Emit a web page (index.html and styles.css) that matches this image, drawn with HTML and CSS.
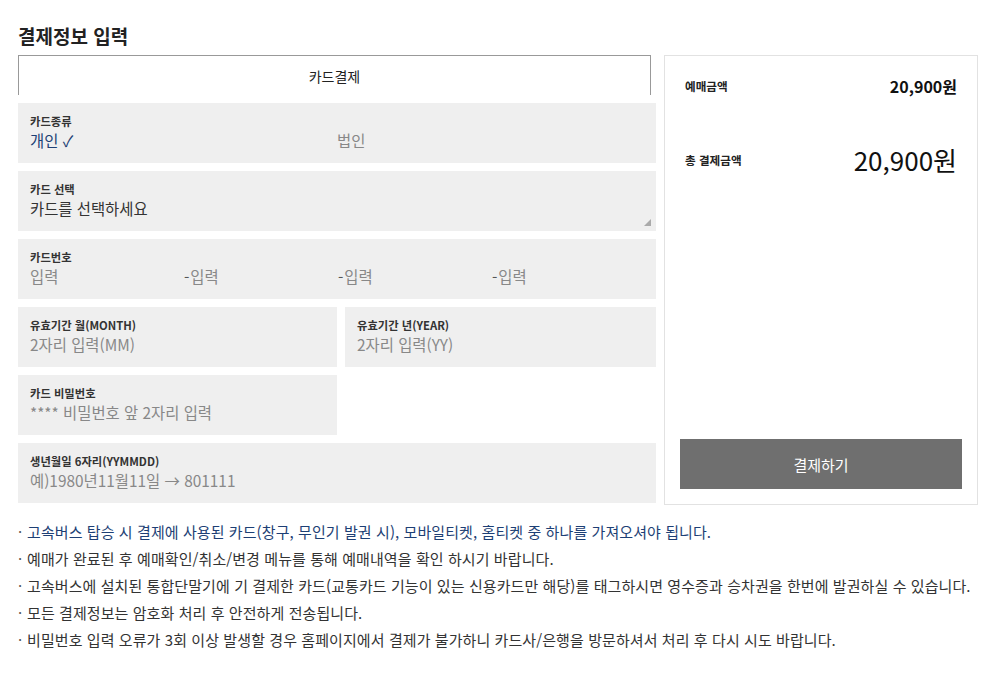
FILE: index.html
```html
<!DOCTYPE html>
<html lang="ko">
<head>
<meta charset="utf-8">
<title>결제정보 입력</title>
<link rel="stylesheet" href="styles.css">
</head>
<body>
<div class="page">
  <h2 class="title">결제정보 입력</h2>
  <div class="main">
    <div class="form-col">
      <div class="tab">카드결제</div>
      <div class="panel">
        <div class="label">카드종류</div>
        <div class="kind-row">
          <span class="kind selected">개인 <span class="check">✓</span></span>
          <span class="kind">법인</span>
        </div>
      </div>
      <div class="panel select-panel">
        <div class="label">카드 선택</div>
        <div class="value dark">카드를 선택하세요</div>
        <span class="resize"></span>
      </div>
      <div class="panel">
        <div class="label">카드번호</div>
        <div class="num-row">
          <span class="value">입력</span>
          <span class="value"><span class="dash">-</span>입력</span>
          <span class="value"><span class="dash">-</span>입력</span>
          <span class="value"><span class="dash">-</span>입력</span>
        </div>
      </div>
      <div class="half-row">
        <div class="panel">
          <div class="label">유효기간 월(MONTH)</div>
          <div class="value">2자리 입력(MM)</div>
        </div>
        <div class="panel">
          <div class="label">유효기간 년(YEAR)</div>
          <div class="value">2자리 입력(YY)</div>
        </div>
      </div>
      <div class="half-row">
        <div class="panel">
          <div class="label">카드 비밀번호</div>
          <div class="value">**** 비밀번호 앞 2자리 입력</div>
        </div>
      </div>
      <div class="panel">
        <div class="label">생년월일 6자리(YYMMDD)</div>
        <div class="value">예)1980년11월11일 → 801111</div>
      </div>
    </div>
    <div class="summary">
      <div class="sum-row">
        <span class="sum-label">예매금액</span>
        <span class="sum-amount">20,900원</span>
      </div>
      <div class="sum-row total">
        <span class="sum-label">총 결제금액</span>
        <span class="total-amount">20,900원</span>
      </div>
      <button class="pay-btn" type="button">결제하기</button>
    </div>
  </div>
  <ul class="notes">
    <li class="highlight">고속버스 탑승 시 결제에 사용된 카드(창구, 무인기 발권 시), 모바일티켓, 홈티켓 중 하나를 가져오셔야 됩니다.</li>
    <li>예매가 완료된 후 예매확인/취소/변경 메뉴를 통해 예매내역을 확인 하시기 바랍니다.</li>
    <li>고속버스에 설치된 통합단말기에 기 결제한 카드(교통카드 기능이 있는 신용카드만 해당)를 태그하시면 영수증과 승차권을 한번에 발권하실 수 있습니다.</li>
    <li>모든 결제정보는 암호화 처리 후 안전하게 전송됩니다.</li>
    <li>비밀번호 입력 오류가 3회 이상 발생할 경우 홈페이지에서 결제가 불가하니 카드사/은행을 방문하셔서 처리 후 다시 시도 바랍니다.</li>
  </ul>
</div>
</body>
</html>
```

FILE: styles.css
```css
* { box-sizing: border-box; }
html, body { margin: 0; padding: 0; background: #fff; }
body {
  font-family: "Noto Sans CJK KR", "Noto Sans", sans-serif;
  color: #333;
}
.page { padding: 23px 21px 0 18px; }
.title {
  margin: 0 0 6px;
  font-size: 19px;
  line-height: 26px;
  font-weight: 700;
  color: #222;
}
.main { display: flex; gap: 8px; align-items: stretch; }
.form-col { width: 638px; display: flex; flex-direction: column; gap: 8px; }
.tab {
  width: 633px;
  height: 40px;
  border: 1px solid #999;
  border-bottom: none;
  text-align: center;
  font-size: 14px;
  line-height: 40px;
  color: #222;
}
.panel {
  position: relative;
  background: #efefef;
  height: 60px;
  padding: 10px 12px 0;
}
.label {
  font-size: 11.3px;
  font-weight: 700;
  line-height: 16px;
  color: #333;
}
.value {
  font-size: 15.4px;
  line-height: 22px;
  color: #888;
}
.value.dark { color: #333; }
.kind-row { display: grid; grid-template-columns: 307px 1fr; font-size: 15.4px; line-height: 22px; }
.kind { color: #888; }
.kind.selected { color: #1d3f75; }
.resize {
  position: absolute;
  right: 5px;
  bottom: 5px;
  width: 0;
  height: 0;
  border-left: 7px solid transparent;
  border-bottom: 7px solid #aaa;
}
.num-row { display: grid; grid-template-columns: repeat(4, 154px); }
.dash { color: #555; margin-right: 1px; }
.half-row { display: grid; grid-template-columns: 319px 311px; gap: 8px; }
.summary {
  width: 314px;
  min-height: 450px;
  border: 1px solid #e2e2e2;
  padding: 20px 15px 15px;
  display: flex;
  flex-direction: column;
}
.sum-row {
  display: flex;
  justify-content: space-between;
  align-items: center;
  padding: 0 5px;
  height: 20px;
}
.sum-label { font-size: 11.6px; font-weight: 700; color: #222; }
.sum-amount { font-size: 16px; font-weight: 700; color: #111; }
.sum-row.total { margin-top: 47px; height: 34px; }
.total-amount { font-size: 26px; font-weight: 400; color: #111; line-height: 34px; }
.pay-btn {
  margin-top: auto;
  height: 50px;
  width: 100%;
  border: none;
  background: #6f6f6f;
  color: #fff;
  font-family: inherit;
  font-size: 15px;
  cursor: pointer;
}
.notes {
  list-style: none;
  margin: 13px 0 0;
  padding: 0;
}
.notes li {
  font-size: 15px;
  line-height: 27px;
  letter-spacing: 0.08px;
  color: #333;
  padding-left: 9px;
  position: relative;
  white-space: nowrap;
}
.notes li::before {
  content: "·";
  position: absolute;
  left: 0;
  top: 0;
  color: #555;
}
.notes li.highlight { color: #1d3f75; }
```
